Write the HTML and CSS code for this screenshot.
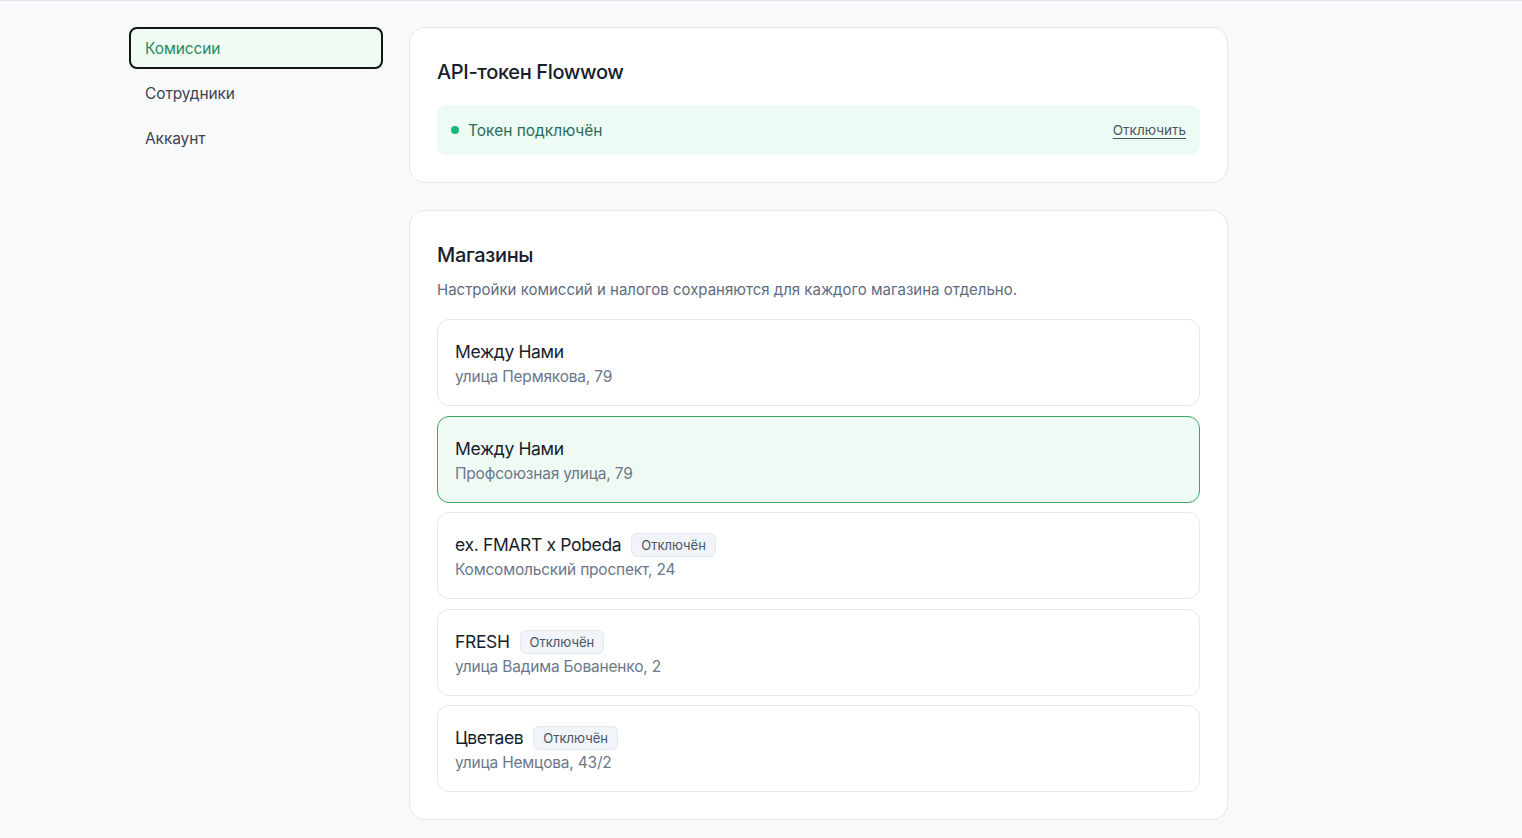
FILE: index.html
```html
<!DOCTYPE html>
<html lang="ru">
<head>
<meta charset="utf-8">
<title>Настройки</title>
<link rel="stylesheet" href="styles.css">
</head>
<body>
<div class="page">
  <nav class="side">
    <a class="nav-item active">Комиссии</a>
    <a class="nav-item">Сотрудники</a>
    <a class="nav-item">Аккаунт</a>
  </nav>
  <main class="main">
    <section class="card">
      <h2 class="card-title">API-токен Flowwow</h2>
      <div class="token">
        <span class="dot"></span>
        <span class="token-text">Токен подключён</span>
        <a class="token-off">Отключить</a>
      </div>
    </section>
    <section class="card">
      <h2 class="card-title">Магазины</h2>
      <p class="desc">Настройки комиссий и налогов сохраняются для каждого магазина отдельно.</p>
      <div class="stores">
        <div class="store">
          <div class="store-name">Между Нами</div>
          <div class="store-addr">улица Пермякова, 79</div>
        </div>
        <div class="store selected">
          <div class="store-name">Между Нами</div>
          <div class="store-addr">Профсоюзная улица, 79</div>
        </div>
        <div class="store">
          <div class="store-name">ex. FMART x Pobeda <span class="badge">Отключён</span></div>
          <div class="store-addr">Комсомольский проспект, 24</div>
        </div>
        <div class="store">
          <div class="store-name">FRESH <span class="badge">Отключён</span></div>
          <div class="store-addr">улица Вадима Бованенко, 2</div>
        </div>
        <div class="store">
          <div class="store-name">Цветаев <span class="badge">Отключён</span></div>
          <div class="store-addr">улица Немцова, 43/2</div>
        </div>
      </div>
    </section>
  </main>
</div>
</body>
</html>
```

FILE: styles.css
```css
* { box-sizing: border-box; }
html, body { margin: 0; padding: 0; }
body {
  background: #f8f9fb;
  font-family: Inter, "Noto Sans", "Liberation Sans", sans-serif;
  color: #1a2233;
  border-top: 1px solid #e3e8f0;
  min-height: 838px;
}
.page {
  display: flex;
  align-items: flex-start;
  gap: 26px;
  padding: 26px 0 18px 129px;
}
.side {
  width: 254px;
  display: flex;
  flex-direction: column;
  gap: 3px;
}
.nav-item {
  display: flex;
  align-items: center;
  height: 42px;
  padding: 0 14px;
  border: 2px solid transparent;
  border-radius: 8px;
  font-size: 15.5px;
  color: #3c4452;
  letter-spacing: -0.1px;
}
.nav-item.active {
  border-color: #141414;
  background: #f0fbf4;
  color: #268a5c;
}
.main {
  width: 819px;
  display: flex;
  flex-direction: column;
  gap: 27px;
}
.card {
  background: #fff;
  border: 1px solid #e3e8f0;
  border-radius: 16px;
  padding: 30px 27px 27px;
}
.card-title {
  margin: 0;
  font-size: 20px;
  line-height: 28px;
  font-weight: 550;
  color: #161d2b;
  letter-spacing: -0.35px;
}
.token {
  margin-top: 19px;
  height: 50px;
  border-radius: 9px;
  background: #ecfbf3;
  display: flex;
  align-items: center;
  padding: 0 14px 0 14px;
}
.dot {
  width: 8px;
  height: 8px;
  border-radius: 50%;
  background: #14b87a;
  margin-right: 9px;
}
.token-text {
  font-size: 15.5px;
  color: #2b6b5a;
  flex: 1;
}
.token-off {
  font-size: 13.5px;
  color: #4b5563;
  text-decoration: underline;
  text-underline-offset: 3px;
}
.desc {
  margin: 10px 0 0;
  font-size: 15px;
  line-height: 22px;
  color: #5e6b80;
  letter-spacing: 0;
}
.stores {
  margin-top: 18px;
  display: flex;
  flex-direction: column;
  gap: 9.5px;
}
.store {
  height: 87px;
  border: 1px solid #e3e8f0;
  border-radius: 12px;
  padding: 19px 17px 0;
  background: #fff;
}
.store.selected {
  background: #f0faf4;
  border-color: #3aa862;
}
.store-name {
  display: flex;
  align-items: center;
  gap: 10px;
  font-size: 17.5px;
  line-height: 26px;
  color: #161d2b;
  letter-spacing: -0.35px;
}
.store-addr {
  margin-top: 1px;
  font-size: 15.5px;
  line-height: 22px;
  color: #6b778a;
  letter-spacing: -0.2px;
}
.badge {
  display: inline-flex;
  align-items: center;
  height: 24px;
  padding: 0 9px;
  border: 1px solid #e3e8f0;
  background: #f1f4f8;
  border-radius: 6px;
  font-size: 13px;
  color: #475569;
  letter-spacing: 0;
}
```
